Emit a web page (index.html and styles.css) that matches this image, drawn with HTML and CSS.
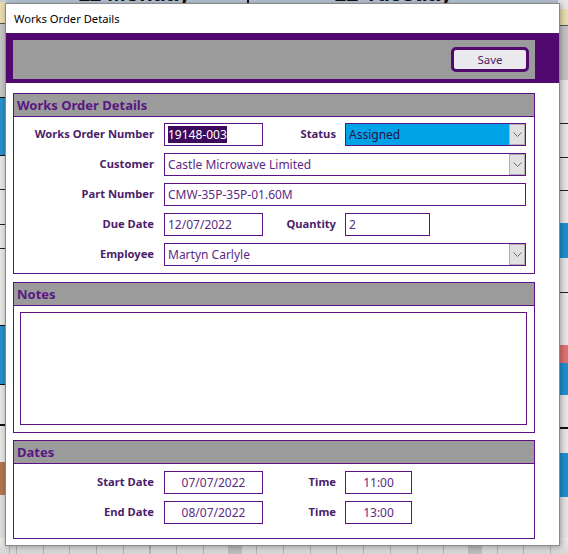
FILE: index.html
```html
<!DOCTYPE html>
<html lang="en">
<head>
<meta charset="utf-8">
<title>Works Order Details</title>
<link rel="stylesheet" href="styles.css">
</head>
<body>
<div class="desk">
  <div class="sheet-head"><span class="day d1">11 Monday</span><span class="day d2">12 Tuesday</span></div>
  <div class="edge edge-left"></div>
  <div class="edge edge-right"></div>
  <div class="sheet-foot"></div>
</div>

<div class="window">
  <div class="titlebar">Works Order Details</div>
  <div class="band">
    <div class="band-inner"><button class="save">Save</button></div>
  </div>
  <div class="content">
    <section class="panel">
      <div class="panel-head">Works Order Details</div>
      <div class="grid details-grid">
        <div class="lbl">Works Order Number</div>
        <div class="field"><span class="sel">19148-003</span></div>
        <div class="lbl lbl2">Status</div>
        <div class="field combo status"><span>Assigned</span><span class="drop"><svg width="9" height="5" viewBox="0 0 9 5"><path d="M0.5 0.5 L4.5 4.5 L8.5 0.5" fill="none" stroke="#6b6b6b" stroke-width="1"/></svg></span></div>

        <div class="lbl">Customer</div>
        <div class="field combo span3"><span>Castle Microwave Limited</span><span class="drop"><svg width="9" height="5" viewBox="0 0 9 5"><path d="M0.5 0.5 L4.5 4.5 L8.5 0.5" fill="none" stroke="#6b6b6b" stroke-width="1"/></svg></span></div>

        <div class="lbl">Part Number</div>
        <div class="field span3">CMW-35P-35P-01.60M</div>

        <div class="lbl">Due Date</div>
        <div class="field">12/07/2022</div>
        <div class="lbl lbl2">Quantity</div>
        <div class="field qty">2</div>

        <div class="lbl">Employee</div>
        <div class="field combo span3"><span>Martyn Carlyle</span><span class="drop"><svg width="9" height="5" viewBox="0 0 9 5"><path d="M0.5 0.5 L4.5 4.5 L8.5 0.5" fill="none" stroke="#6b6b6b" stroke-width="1"/></svg></span></div>
      </div>
    </section>

    <section class="panel notes">
      <div class="panel-head">Notes</div>
      <div class="notes-body"><div class="notes-box"></div></div>
    </section>

    <section class="panel dates">
      <div class="panel-head">Dates</div>
      <div class="grid dates-grid">
        <div class="lbl">Start Date</div>
        <div class="field center">07/07/2022</div>
        <div class="lbl lbl2">Time</div>
        <div class="field center time">11:00</div>

        <div class="lbl">End Date</div>
        <div class="field center">08/07/2022</div>
        <div class="lbl lbl2">Time</div>
        <div class="field center time">13:00</div>
      </div>
    </section>
  </div>
</div>
</body>
</html>
```

FILE: styles.css
```css
* { box-sizing: border-box; }

html, body {
  margin: 0;
  padding: 0;
}

body {
  position: relative;
  width: 568px;
  height: 554px;
  overflow: hidden;
  background: #e4e4e4;
  font-family: "Noto Sans", "Open Sans", sans-serif;
}

/* ---------- background spreadsheet ---------- */
.desk {
  position: absolute;
  inset: 0;
}

.sheet-head {
  position: absolute;
  left: 0;
  top: 0;
  width: 568px;
  height: 12px;
  background: linear-gradient(to right, transparent 0 247px, #111 247px 249px, transparent 249px), #b7c3d4;
  overflow: hidden;
}

.day {
  position: absolute;
  top: -19px;
  font: bold 22px "Liberation Sans", sans-serif;
  color: #111;
  white-space: nowrap;
}
.d1 { left: 78px; }
.d2 { left: 334px; }

.edge {
  position: absolute;
  top: 0;
  height: 554px;
}

.edge-left {
  left: 0;
  width: 6px;
  background: linear-gradient(to bottom,
    #c9ced8 0 2px, #e9ddb0 2px 23px, #555 23px 24px,
    #c6c6c6 24px 97px, #111 97px 98px,
    #2b8fc6 98px 155px, #111 155px 156px,
    #e6e6e6 156px 189px, #222 189px 190px,
    #e6e6e6 190px 224px, #222 224px 225px,
    #e6e6e6 225px 248px, #222 248px 249px,
    #e6e6e6 249px 325px, #111 325px 326px,
    #2b8fc6 326px 384px, #111 384px 385px,
    #e6e6e6 385px 424px, #111 424px 426px,
    #e6e6e6 426px 462px, #b27450 462px 495px,
    #dedede 495px);
}

.edge-right {
  left: 558px;
  width: 10px;
  background: linear-gradient(to bottom,
    #e6e6e6 0 9px, #e9ddb0 9px 25px, #555 25px 26px,
    #c4c4c4 26px 80px,
    #e6e6e6 80px 123px, #222 123px 124px,
    #e6e6e6 124px 157px, #222 157px 158px,
    #e6e6e6 158px 190px, #222 190px 191px,
    #e6e6e6 191px 223px,
    #1f8fd0 223px 258px,
    #e6e6e6 258px 292px, #222 292px 293px,
    #e6e6e6 293px 345px,
    #e07272 345px 363px,
    #1f8fd0 363px 395px,
    #e6e6e6 395px 427px, #111 427px 429px,
    #e6e6e6 429px 453px,
    #1f8fd0 453px 497px,
    #e4e4e4 497px);
}

.sheet-foot {
  position: absolute;
  left: 0;
  top: 538px;
  width: 568px;
  height: 16px;
  background:
    linear-gradient(to right, transparent 0 228px, #bdbdbd 228px 242px, transparent 242px 468px, #bdbdbd 468px 482px, transparent 482px),
    repeating-linear-gradient(to right, #b3b3b3 0 1px, transparent 1px 26.7px),
    linear-gradient(to bottom, #ececec, #d6d6d6);
  background-position: 0 0, 16px 0, 0 0;
}

/* ---------- dialog window ---------- */
.window {
  position: absolute;
  left: 5px;
  top: 3px;
  width: 555px;
  height: 543px;
  background: #fff;
  border: 1px solid #8a8a8a;
  box-shadow: 1px 1px 6px rgba(0, 0, 0, 0.35);
  display: flex;
  flex-direction: column;
  overflow: hidden;
}

.titlebar {
  height: 29px;
  flex: none;
  display: flex;
  align-items: center;
  padding-left: 8px;
  font-size: 11.2px;
  color: #000;
}

.band {
  flex: none;
  background: #52096f;
  padding: 7px 24px 4px 7px;
}

.band-inner {
  height: 39px;
  background: #9b9b9b;
  display: flex;
  justify-content: flex-end;
  align-items: center;
  padding-right: 6px;
}

.save {
  width: 78px;
  height: 25px;
  padding: 0;
  border: 3px solid #52096f;
  border-radius: 5px;
  background: #e9e9ee;
  color: #4b2366;
  font-family: "Noto Sans", sans-serif;
  font-size: 11.5px;
  line-height: 1;
}

.content {
  padding: 10px 24px 0 7px;
  display: flex;
  flex-direction: column;
}

.panel {
  border: 1px solid #5b1286;
}
.notes { margin-top: 8px; }
.dates { margin-top: 7px; }

.panel-head {
  height: 23px;
  background: #9b9b9b;
  border-bottom: 1px solid #5b1286;
  padding-left: 3px;
  display: flex;
  align-items: center;
  font-weight: bold;
  font-size: 13px;
  color: #5a1784;
}

.grid {
  display: grid;
  grid-template-columns: 150px 99px 82px 181px;
  grid-auto-rows: 23px;
  row-gap: 7px;
}
.details-grid { padding: 6px 0 7px; }
.dates-grid { padding: 7px 0 14px; }

.lbl {
  align-self: center;
  text-align: right;
  padding-right: 10px;
  padding-bottom: 2px;
  font-weight: bold;
  font-size: 11.2px;
  color: #4a1e6a;
  white-space: nowrap;
}
.lbl2 { padding-right: 9px; }

.field {
  border: 1px solid #5b1286;
  background: #fff;
  display: flex;
  align-items: center;
  padding-left: 3px;
  font-size: 12px;
  color: #5b2a86;
  white-space: nowrap;
  overflow: hidden;
}

.span3 { grid-column: 2 / 5; }
.qty { width: 85px; }
.time { width: 67px; }
.center { justify-content: center; padding-left: 0; }

.sel {
  background: #3d0b5c;
  color: #fff;
  padding: 1px 0;
  line-height: 15px;
}

.status {
  background: #00a2e8;
  color: #2a1448;
}

.combo .drop {
  margin-left: auto;
  width: 16px;
  align-self: stretch;
  background: #e1e1e1;
  border: 1px solid #b0b0b0;
  display: flex;
  align-items: center;
  justify-content: center;
}

.notes-body {
  padding: 6px 7px 7px 6px;
}
.notes-box {
  height: 113px;
  border: 1px solid #5b1286;
}
```
